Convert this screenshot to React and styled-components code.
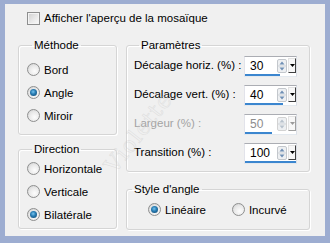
import React from "react";
import styled, { createGlobalStyle, css } from "styled-components";

const GlobalStyle = createGlobalStyle`
  html, body {
    margin: 0;
    padding: 0;
  }
  body {
    background: #9dadd1;
    font-family: "Liberation Sans", "DejaVu Sans", sans-serif;
    font-size: 11.5px;
    color: #000;
  }
`;

const Frame = styled.div`
  width: 330px;
  height: 243px;
  box-sizing: border-box;
  padding: 4px 5px 7px 5px;
  background: #9dadd1;
`;

const Panel = styled.div`
  position: relative;
  height: 100%;
  box-sizing: border-box;
  padding: 7px 15px 0 13px;
  background: #f0f0f0;
  overflow: hidden;
`;

const CheckRow = styled.label`
  display: flex;
  align-items: center;
  gap: 4px;
  height: 14px;
  margin-left: 9px;
`;

const CheckBox = styled.span`
  width: 13px;
  height: 13px;
  box-sizing: border-box;
  border: 1px solid #8e8f8f;
  background: linear-gradient(135deg, #cfcfcf 0%, #e9e9e9 55%, #fbfbfb 100%);
  box-shadow: inset 0 0 0 1px #f4f4f4;
`;

const Columns = styled.div`
  display: grid;
  grid-template-columns: 99px 184px;
  column-gap: 9px;
  margin-top: 13px;
`;

const Column = styled.div`
  display: flex;
  flex-direction: column;
  gap: ${(p) => p.$gap}px;
`;

const Group = styled.fieldset`
  margin: 0;
  min-width: 0;
  height: ${(p) => p.$height}px;
  box-sizing: border-box;
  padding: ${(p) => p.$padTop}px 0 0 ${(p) => p.$padLeft}px;
  border: 1px solid #d5d5d5;
  border-radius: 3px;
  box-shadow: inset 1px 1px 0 #fff, 1px 1px 0 #fff;
`;

const Legend = styled.legend`
  margin-left: 5px;
  padding: 0 2px;
  font-size: 11.5px;
  line-height: 14px;
`;

const RadioRow = styled.label`
  display: flex;
  align-items: center;
  gap: 4px;
  height: 23px;
`;

const RadioLine = styled.div`
  display: flex;
  align-items: center;
  gap: ${(p) => p.$gap}px;
  height: 23px;
`;

const RadioDot = styled.span`
  display: inline-flex;
  align-items: center;
  justify-content: center;
  flex: none;
  width: 13px;
  height: 13px;
  box-sizing: border-box;
  border-radius: 50%;
  border: 1px solid #8e8f8f;
  background: radial-gradient(circle at 60% 65%, #fdfdfd 0%, #e8e8e8 55%, #c9c9c9 100%);
  ${(p) =>
    p.$checked &&
    css`
      &::after {
        content: "";
        width: 7px;
        height: 7px;
        border-radius: 50%;
        background: radial-gradient(circle at 45% 40%, #79c4ee 0%, #2a7fb6 40%, #0c3f66 100%);
      }
    `}
`;

const ParamRow = styled.div`
  display: flex;
  align-items: center;
  justify-content: space-between;
  height: 29px;
  padding-right: 12px;
  color: ${(p) => (p.$disabled ? "#a3a3a3" : "#000")};
`;

const ParamLabel = styled.span`
  margin-top: -3px;
`;

const Spin = styled.div`
  display: flex;
  flex-direction: column;
  width: 53px;
  height: 21px;
  box-sizing: border-box;
  border: 1px solid;
  border-color: #abadb3 #dbdfe6 #e3e9ef #e2e3ea;
  background: #fff;
`;

const SpinTop = styled.div`
  display: flex;
  align-items: center;
  height: 16px;
  padding: 1px 0 0 5px;
  font-size: 12px;
  color: ${(p) => (p.$disabled ? "#8d8d8d" : "#000")};
`;

const SpinValue = styled.span`
  flex: 1;
`;

const DropButton = styled.span`
  display: flex;
  align-items: center;
  justify-content: center;
  width: 8px;
  height: 15px;
  box-sizing: border-box;
  margin-left: 1px;
  border-right: 1px solid ${(p) => (p.$disabled ? "#a0a0a0" : "#404040")};
  border-bottom: 1px solid ${(p) => (p.$disabled ? "#a0a0a0" : "#404040")};
  border-left: 1px solid #e3e3e3;
  border-top: 1px solid #e3e3e3;
  background: #f7f7f7;
`;

const Bar = styled.span`
  display: block;
  height: 3px;
  margin-top: 1px;
  background: #3b86cf;
`;

const StyleRow = styled.div`
  display: flex;
  align-items: center;
  gap: 26px;
  padding-left: 21px;
  height: 23px;
`;

const Watermark = styled.span`
  position: absolute;
  left: 86px;
  top: 116px;
  transform: rotate(-52deg);
  font-family: "DejaVu Serif", serif;
  font-size: 22px;
  letter-spacing: 1px;
  color: transparent;
  -webkit-text-stroke: 0.5px rgba(200, 200, 200, 0.5);
  pointer-events: none;
`;

function UpDown({ disabled }) {
  const tri = disabled ? "#b8c2cc" : "#6f8fb4";
  return (
    <svg width="10" height="14" viewBox="0 0 10 14">
      <rect x="0.5" y="0.5" width="9" height="13" rx="1.5" fill="#eef0f2" stroke={disabled ? "#d2d2d2" : "#c3c7cc"} />
      <line x1="1" y1="7" x2="9" y2="7" stroke="#cfd3d8" />
      <path d="M2.5 5.5 L5 2.5 L7.5 5.5 Z" fill={tri} />
      <path d="M2.5 8.5 L5 11.5 L7.5 8.5 Z" fill={tri} />
    </svg>
  );
}

function Caret({ disabled }) {
  return (
    <svg width="5" height="3" viewBox="0 0 5 3">
      <path d="M0 0 H5 L2.5 3 Z" fill={disabled ? "#9a9a9a" : "#000"} />
    </svg>
  );
}

function Radio({ label, checked }) {
  return (
    <RadioRow>
      <RadioDot $checked={checked} />
      {label}
    </RadioRow>
  );
}

const params = [
  { label: "Décalage horiz. (%) :", value: 30, bar: 35 },
  { label: "Décalage vert. (%) :", value: 40, bar: 38 },
  { label: "Largeur (%) :", value: 50, bar: 27, disabled: true },
  { label: "Transition (%) :", value: 100, bar: 51 },
];

export default function App() {
  return (
    <>
      <GlobalStyle />
      <Frame>
        <Panel>
          <CheckRow>
            <CheckBox />
            Afficher l'aperçu de la mosaïque
          </CheckRow>
          <Columns>
            <Column $gap={7}>
              <Group $height={97} $padTop={6} $padLeft={8}>
                <Legend>Méthode</Legend>
                <Radio label="Bord" />
                <Radio label="Angle" checked />
                <Radio label="Miroir" />
              </Group>
              <Group $height={87} $padTop={1} $padLeft={8}>
                <Legend>Direction</Legend>
                <Radio label="Horizontale" />
                <Radio label="Verticale" />
                <Radio label="Bilatérale" checked />
              </Group>
            </Column>
            <Column $gap={10}>
              <Group $height={134} $padTop={0} $padLeft={7}>
                <Legend>Paramètres</Legend>
                {params.map((p) => (
                  <ParamRow key={p.label} $disabled={p.disabled}>
                    <ParamLabel>{p.label}</ParamLabel>
                    <Spin>
                      <SpinTop $disabled={p.disabled}>
                        <SpinValue>{p.value}</SpinValue>
                        <UpDown disabled={p.disabled} />
                        <DropButton $disabled={p.disabled}>
                          <Caret disabled={p.disabled} />
                        </DropButton>
                      </SpinTop>
                      <Bar style={{ width: p.bar }} />
                    </Spin>
                  </ParamRow>
                ))}
              </Group>
              <Group $height={48} $padTop={2} $padLeft={0}>
                <Legend>Style d'angle</Legend>
                <StyleRow>
                  <RadioLine $gap={4}>
                    <RadioDot $checked />
                    Linéaire
                  </RadioLine>
                  <RadioLine $gap={4}>
                    <RadioDot />
                    Incurvé
                  </RadioLine>
                </StyleRow>
              </Group>
            </Column>
          </Columns>
          <Watermark>Violette</Watermark>
        </Panel>
      </Frame>
    </>
  );
}
